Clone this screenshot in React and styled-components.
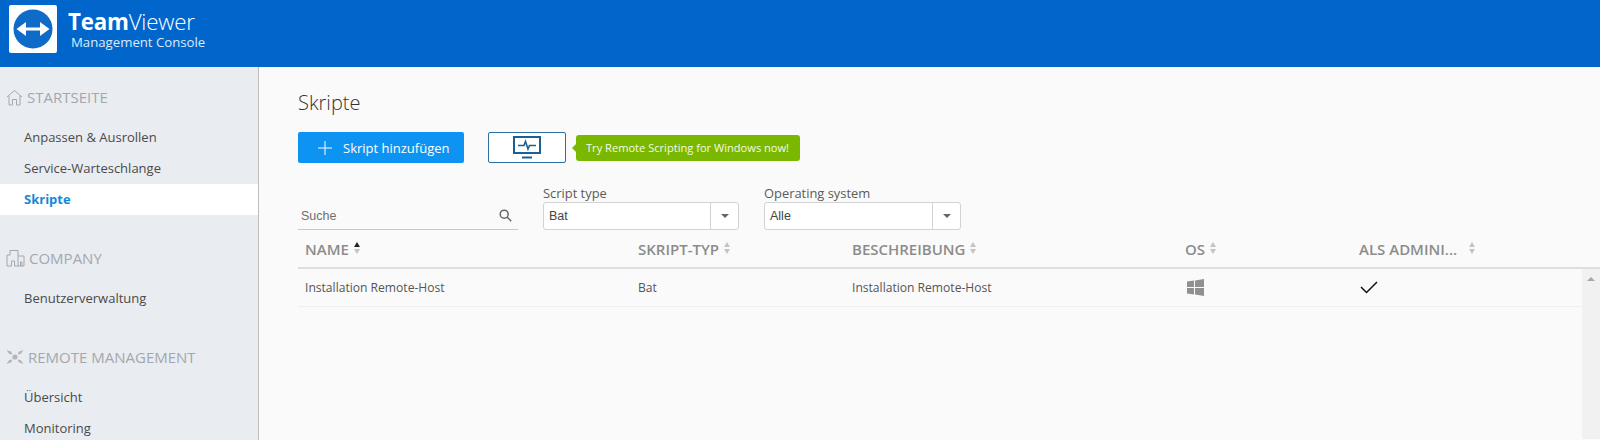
import React from "react"
import styled, { createGlobalStyle } from "styled-components"

const GlobalStyle = createGlobalStyle`
  html, body {
    margin: 0;
    height: 440px;
    overflow: hidden;
    background: #fafafa;
    font-family: "Open Sans", "Noto Sans", sans-serif;
  }
  * { box-sizing: border-box; }
`

const Header = styled.header`
  height: 67px;
  background: #0066cc;
  display: flex;
  align-items: flex-start;
  padding: 5px 0 0 9px;
  color: #fff;
`

const LogoBox = styled.div`
  width: 48px;
  height: 48px;
  background: #fff;
  border-radius: 2px;
  display: flex;
  align-items: center;
  justify-content: center;
`

const Brand = styled.div`
  margin-left: 11px;
  display: flex;
  flex-direction: column;
`

const BrandName = styled.div`
  font-size: 22.3px;
  line-height: 24px;
  margin-top: 5px;
  letter-spacing: -0.2px;
  b { font-weight: 700; }
  span { font-weight: 300; }
`

const BrandSub = styled.div`
  font-size: 13.2px;
  line-height: 16px;
  margin-left: 3px;
  font-weight: 400;
  color: #dcebfa;
`

const Body = styled.div`
  display: flex;
  height: 373px;
`

const Sidebar = styled.nav`
  width: 259px;
  flex: none;
  background: #e9ecf1;
  border-right: 1px solid #bdbdbd;
  padding-top: 15px;
  overflow: hidden;
`

const Group = styled.div`
  margin-bottom: ${(p) => p.$gap}px;
`

const GroupTitle = styled.div`
  display: flex;
  align-items: center;
  gap: 4px;
  height: 30px;
  padding-left: 6px;
  margin-bottom: 10px;
  font-size: 15px;
  color: #a4a8ae;
  svg { flex: none; }
`

const NavItem = styled.div`
  height: 31px;
  line-height: 31px;
  padding-left: 24px;
  font-size: 13px;
  color: ${(p) => (p.$active ? "#1787d8" : "#4a4a4a")};
  font-weight: ${(p) => (p.$active ? 700 : 400)};
  background: ${(p) => (p.$active ? "#fff" : "transparent")};
`

const Main = styled.main`
  flex: 1;
  padding: 22px 0 0 39px;
  display: flex;
  flex-direction: column;
`

const Title = styled.h1`
  margin: 0;
  font-size: 20px;
  line-height: 28px;
  font-weight: 300;
  color: #333;
`

const Toolbar = styled.div`
  display: flex;
  align-items: center;
  margin-top: 15px;
`

const AddButton = styled.div`
  width: 166px;
  height: 31px;
  border-radius: 2px;
  background: #0d93f2;
  color: #fff;
  font-size: 13px;
  font-weight: 500;
  display: flex;
  align-items: center;
  padding-left: 20px;
  gap: 11px;
`

const MonitorButton = styled.div`
  width: 78px;
  height: 31px;
  margin-left: 24px;
  border: 1px solid #2b6f9e;
  border-radius: 2px;
  background: #fff;
  display: flex;
  align-items: center;
  justify-content: center;
`

const Promo = styled.div`
  position: relative;
  margin-left: 10px;
  height: 26px;
  width: 224px;
  border-radius: 3px;
  background: #7ab800;
  color: #f4f9e6;
  font-size: 11.1px;
  line-height: 26px;
  padding-left: 10px;
  white-space: nowrap;
  &::before {
    content: "";
    position: absolute;
    left: -4px;
    top: 9px;
    border-top: 4px solid transparent;
    border-bottom: 4px solid transparent;
    border-right: 4px solid #7ab800;
  }
`

const Filters = styled.div`
  display: flex;
  align-items: flex-end;
  margin-top: 21px;
`

const SearchField = styled.div`
  width: 220px;
  height: 28px;
  border-bottom: 1px solid #c8c8c8;
  display: flex;
  align-items: center;
  justify-content: space-between;
  padding: 0 6px 0 3px;
  font-family: "Liberation Sans", sans-serif;
  font-size: 12.5px;
  color: #6f6f6f;
`

const SelectField = styled.div`
  width: ${(p) => p.$width}px;
  margin-left: ${(p) => p.$left}px;
`

const SelectLabel = styled.div`
  font-size: 12.9px;
  line-height: 18px;
  color: #5a5a5a;
`

const SelectBox = styled.div`
  height: 28px;
  background: #fff;
  border: 1px solid #d2d2d2;
  border-radius: 3px;
  display: flex;
  align-items: center;
  justify-content: space-between;
  font-family: "Liberation Sans", sans-serif;
  font-size: 12.5px;
  color: #444;
  padding-left: 5px;
`

const Caret = styled.div`
  width: 28px;
  height: 100%;
  border-left: 1px solid #d2d2d2;
  display: flex;
  align-items: center;
  justify-content: center;
  &::after {
    content: "";
    border-top: 4px solid #666;
    border-left: 4px solid transparent;
    border-right: 4px solid transparent;
  }
`

const Table = styled.div`
  margin-top: 5px;
`

const Columns = "grid-template-columns: 333px 214px 333px 174px 1fr;"

const HeadRow = styled.div`
  display: grid;
  ${Columns}
  height: 34px;
  border-bottom: 2px solid #dedede;
  padding: 0 0 4px 7px;
  align-items: center;
`

const HeadCell = styled.div`
  display: flex;
  align-items: center;
  font-size: 15px;
  font-weight: 600;
  color: #8c8c8c;
  white-space: nowrap;
`

const SortIcon = styled.span`
  display: inline-flex;
  flex-direction: column;
  gap: 2px;
  margin-left: ${(p) => p.$left || 5}px;
  margin-top: -3px;
  &::before, &::after {
    content: "";
    border-left: 3px solid transparent;
    border-right: 3px solid transparent;
  }
  &::before { border-bottom: 5px solid ${(p) => (p.$active ? "#222" : "#c4c4c4")}; }
  &::after { border-top: 5px solid #c4c4c4; }
`

const TableBody = styled.div`
  display: flex;
`

const RowArea = styled.div`
  flex: 1;
`

const Row = styled.div`
  display: grid;
  ${Columns}
  height: 38px;
  border-bottom: 1px solid #efefef;
  padding-left: 7px;
  align-items: center;
  font-size: 12.1px;
  color: #555;
`

const OsCell = styled.div`
  padding-left: 2px;
  display: flex;
`

const AdminCell = styled.div`
  padding-left: 1px;
  display: flex;
`

const Scrollbar = styled.div`
  width: 18px;
  height: 170px;
  background: #f1f1f1;
  display: flex;
  justify-content: center;
  padding-top: 8px;
  &::before {
    content: "";
    height: 0;
    border-bottom: 4px solid #a8a8a8;
    border-left: 4px solid transparent;
    border-right: 4px solid transparent;
  }
`

const Logo = () => (
  <svg width="40" height="40" viewBox="0 0 40 40">
    <circle cx="20" cy="20" r="19.5" fill="#0e6bc8" />
    <path d="M3.5 20 L13 13 L13 18.6 L27 18.6 L27 13 L36.5 20 L27 27 L27 21.4 L13 21.4 L13 27 Z" fill="#fff" />
  </svg>
)

const HomeIcon = () => (
  <svg width="17" height="17" viewBox="0 0 17 17" fill="none" stroke="#a4a8ae" strokeWidth="1">
    <path d="M1 8 L8.5 1.5 L16 8 M3 6.5 V16 H6.5 V10.5 H10.5 V16 H14 V6.5" />
  </svg>
)

const BuildingIcon = () => (
  <svg width="19" height="18" viewBox="0 0 19 18" fill="none" stroke="#a4a8ae" strokeWidth="1">
    <path d="M1 17 V6 H4 V1.5 H12 V17 H8.5 V12 H5.5 V17 Z M12 7 H18 V17 H12 M14.5 17 V13 H16 V17" />
  </svg>
)

const RemoteIcon = () => (
  <svg width="18" height="16" viewBox="0 0 18 16" fill="#b4b8be">
    <circle cx="9" cy="8" r="2.6" />
    <path d="M0.5 1 L5.5 2.8 L6.2 5.6 L3.2 5 Z M17.5 1 L12.5 2.8 L11.8 5.6 L14.8 5 Z M0.5 15 L5.5 13.2 L6.2 10.4 L3.2 11 Z M17.5 15 L12.5 13.2 L11.8 10.4 L14.8 11 Z" />
  </svg>
)

const PlusIcon = () => (
  <svg width="14" height="14" viewBox="0 0 14 14" stroke="#fff" strokeWidth="1">
    <path d="M7 0 V14 M0 7 H14" />
  </svg>
)

const MonitorIcon = () => (
  <svg width="28" height="24" viewBox="0 0 28 24" fill="none" stroke="#1d5f94">
    <rect x="1" y="1" width="26" height="16" strokeWidth="2" />
    <path d="M5 9.5 H11 L12.5 5.5 L15 13 L16.5 9.5 H23" strokeWidth="1.6" />
    <path d="M9 21.5 H19" strokeWidth="2" />
  </svg>
)

const SearchIcon = () => (
  <svg width="13" height="13" viewBox="0 0 13 13" fill="none" stroke="#666" strokeWidth="1.5">
    <circle cx="5.2" cy="5.2" r="4" />
    <path d="M8.2 8.2 L12.2 12.2" />
  </svg>
)

const WindowsIcon = () => (
  <svg width="17" height="17" viewBox="0 0 17 17" fill="#909090">
    <path d="M0 2.6 L7 1.6 V8 H0 Z M8 1.4 L17 0 V8 H8 Z M0 9 H7 V15.4 L0 14.4 Z M8 9 H17 V17 L8 15.6 Z" />
  </svg>
)

const CheckIcon = () => (
  <svg width="18" height="13" viewBox="0 0 18 13" fill="none" stroke="#111" strokeWidth="1.5">
    <path d="M1 6 L6.5 11.5 L17 1" />
  </svg>
)

const App = () => (
  <>
    <GlobalStyle />
    <Header>
      <LogoBox>
        <Logo />
      </LogoBox>
      <Brand>
        <BrandName>
          <b>Team</b>
          <span>Viewer</span>
        </BrandName>
        <BrandSub>Management Console</BrandSub>
      </Brand>
    </Header>
    <Body>
      <Sidebar>
        <Group $gap={28}>
          <GroupTitle>
            <HomeIcon />
            STARTSEITE
          </GroupTitle>
          <NavItem>Anpassen &amp; Ausrollen</NavItem>
          <NavItem>Service-Warteschlange</NavItem>
          <NavItem $active>Skripte</NavItem>
        </Group>
        <Group $gap={28}>
          <GroupTitle>
            <BuildingIcon />
            COMPANY
          </GroupTitle>
          <NavItem>Benutzerverwaltung</NavItem>
        </Group>
        <Group $gap={0}>
          <GroupTitle>
            <RemoteIcon />
            REMOTE MANAGEMENT
          </GroupTitle>
          <NavItem>Übersicht</NavItem>
          <NavItem>Monitoring</NavItem>
        </Group>
      </Sidebar>
      <Main>
        <Title>Skripte</Title>
        <Toolbar>
          <AddButton>
            <PlusIcon />
            Skript hinzufügen
          </AddButton>
          <MonitorButton>
            <MonitorIcon />
          </MonitorButton>
          <Promo>Try Remote Scripting for Windows now!</Promo>
        </Toolbar>
        <Filters>
          <SearchField>
            Suche
            <SearchIcon />
          </SearchField>
          <SelectField $width={196} $left={25}>
            <SelectLabel>Script type</SelectLabel>
            <SelectBox>
              Bat
              <Caret />
            </SelectBox>
          </SelectField>
          <SelectField $width={197} $left={25}>
            <SelectLabel>Operating system</SelectLabel>
            <SelectBox>
              Alle
              <Caret />
            </SelectBox>
          </SelectField>
        </Filters>
        <Table>
          <HeadRow>
            <HeadCell>
              NAME
              <SortIcon $active />
            </HeadCell>
            <HeadCell>
              SKRIPT-TYP
              <SortIcon />
            </HeadCell>
            <HeadCell>
              BESCHREIBUNG
              <SortIcon />
            </HeadCell>
            <HeadCell>
              OS
              <SortIcon />
            </HeadCell>
            <HeadCell>
              ALS ADMINI...
              <SortIcon $left={12} />
            </HeadCell>
          </HeadRow>
          <TableBody>
            <RowArea>
              <Row>
                <span>Installation Remote-Host</span>
                <span>Bat</span>
                <span>Installation Remote-Host</span>
                <OsCell>
                  <WindowsIcon />
                </OsCell>
                <AdminCell>
                  <CheckIcon />
                </AdminCell>
              </Row>
            </RowArea>
            <Scrollbar />
          </TableBody>
        </Table>
      </Main>
    </Body>
  </>
)

export default App
